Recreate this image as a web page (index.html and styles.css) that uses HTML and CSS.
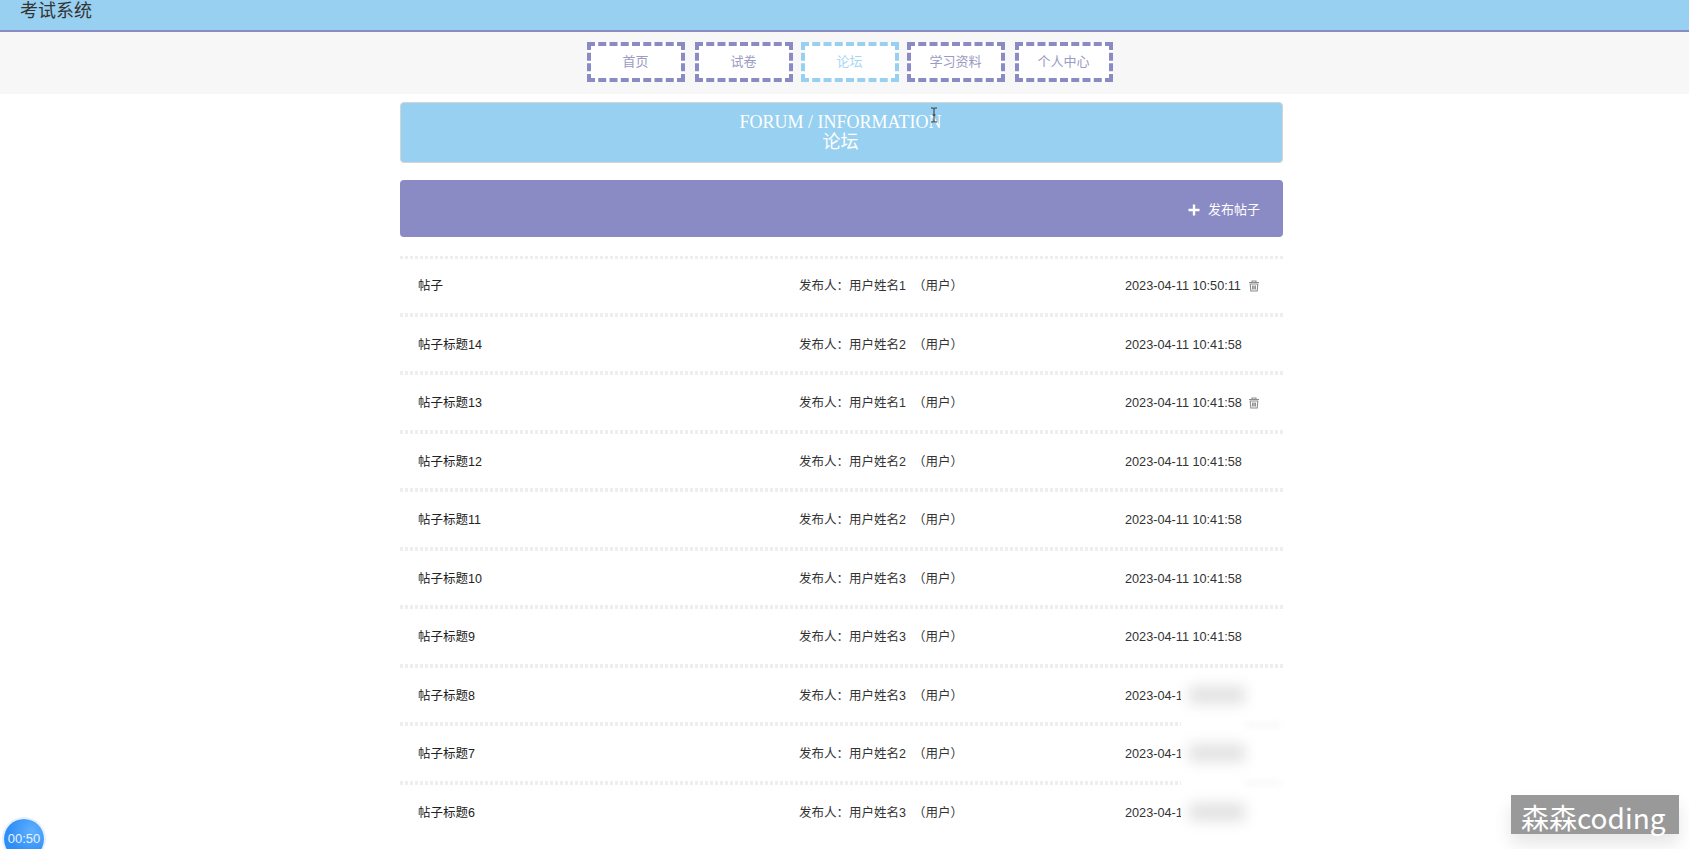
FILE: index.html
```html
<!DOCTYPE html>
<html lang="zh">
<head>
<meta charset="utf-8">
<title>考试系统</title>
<link rel="stylesheet" href="styles.css">
</head>
<body>
<header class="topbar"><span class="brand">考试系统</span></header>
<nav class="nav">
  <a class="nav-item wide-gap">首页</a>
  <a class="nav-item">试卷</a>
  <a class="nav-item active">论坛</a>
  <a class="nav-item wide-gap">学习资料</a>
  <a class="nav-item">个人中心</a>
</nav>
<main class="main">
  <section class="banner">
    <div>FORUM / INFORMATION</div>
    <div>论坛</div>
  </section>
  <section class="toolbar">
    <a class="publish">
      <svg class="plus" viewBox="0 0 12 12" width="12" height="12"><path d="M6 0.5v11M0.5 6h11" stroke="#fff" stroke-width="2.4" fill="none"/></svg>
      <span>发布帖子</span>
    </a>
  </section>
  <ul class="list">
    <li class="row first"><span class="title">帖子</span><span class="author">发布人：用户姓名1 &nbsp;（用户）</span><span class="time">2023-04-11 10:50:11</span><svg class="trash" viewBox="0 0 12 12" width="12" height="12"><path d="M1 2.5h10M4 2.5V1h4v1.5M2.2 4h7.6l-.6 7H2.8zM4.6 5.5v4M6 5.5v4M7.4 5.5v4" stroke="#8c8c8c" stroke-width="1.1" fill="none"/></svg></li>
    <li class="row"><span class="title">帖子标题14</span><span class="author">发布人：用户姓名2 &nbsp;（用户）</span><span class="time">2023-04-11 10:41:58</span></li>
    <li class="row"><span class="title">帖子标题13</span><span class="author">发布人：用户姓名1 &nbsp;（用户）</span><span class="time">2023-04-11 10:41:58</span><svg class="trash" viewBox="0 0 12 12" width="12" height="12"><path d="M1 2.5h10M4 2.5V1h4v1.5M2.2 4h7.6l-.6 7H2.8zM4.6 5.5v4M6 5.5v4M7.4 5.5v4" stroke="#8c8c8c" stroke-width="1.1" fill="none"/></svg></li>
    <li class="row"><span class="title">帖子标题12</span><span class="author">发布人：用户姓名2 &nbsp;（用户）</span><span class="time">2023-04-11 10:41:58</span></li>
    <li class="row"><span class="title">帖子标题11</span><span class="author">发布人：用户姓名2 &nbsp;（用户）</span><span class="time">2023-04-11 10:41:58</span></li>
    <li class="row"><span class="title">帖子标题10</span><span class="author">发布人：用户姓名3 &nbsp;（用户）</span><span class="time">2023-04-11 10:41:58</span></li>
    <li class="row"><span class="title">帖子标题9</span><span class="author">发布人：用户姓名3 &nbsp;（用户）</span><span class="time">2023-04-11 10:41:58</span></li>
    <li class="row"><span class="title">帖子标题8</span><span class="author">发布人：用户姓名3 &nbsp;（用户）</span><span class="time">2023-04-1</span></li>
    <li class="row"><span class="title">帖子标题7</span><span class="author">发布人：用户姓名2 &nbsp;（用户）</span><span class="time">2023-04-1</span></li>
    <li class="row"><span class="title">帖子标题6</span><span class="author">发布人：用户姓名3 &nbsp;（用户）</span><span class="time">2023-04-1</span></li>
  </ul>
</main>
<div class="mosaic">
  <i class="blob b1"></i><i class="blob b2"></i><i class="blob b3"></i>
  <i class="ghost g1"></i><i class="ghost g2"></i>
</div>
<svg class="cursor" viewBox="0 0 8 16" width="8" height="16"><path d="M1 1h2.5l.5 .8.5-.8H7M4 2v12M1 15h2.5l.5-.8.5 .8H7M2.5 8h3" stroke="#333" stroke-width="1" fill="none"/></svg>
<div class="watermark">森森coding</div>
<div class="timer">00:50</div>
</body>
</html>
```
FILE: styles.css
```css
* { box-sizing: border-box; }
html, body { margin: 0; padding: 0; height: 849px; overflow: hidden; background: #fff; }
body { position: relative; font-family: "Liberation Sans", "Noto Sans CJK SC", sans-serif; font-size: 12px; color: #333; }
.topbar { height: 32px; background: #97d0f0; border-bottom: 2px solid #8a8ac4; padding-left: 20px; }
.brand { display: block; font-size: 18px; line-height: 22px; color: #333; }
.nav { height: 62px; background: #f7f7f7; display: flex; justify-content: center; align-items: flex-start; padding: 10px 0 0 10px; gap: 8px; }
.nav-item { width: 98px; height: 40px; border: 4px dashed #8a8ac4; background: #fff; display: flex; align-items: center; justify-content: center; font-size: 13px; line-height: 16px; color: #9a9ac4; }
.nav-item.wide-gap { margin-right: 2px; }
.nav-item.active { border-color: #97d0f0; color: #a9d7f1; }
.main { width: 883px; margin-left: 400px; padding-top: 8px; }
.banner { height: 61px; background: #97d0f0; border: 1px solid #d4d4d4; border-radius: 4px; color: #fff; font-family: "Liberation Serif", "Noto Sans CJK SC", serif; font-size: 18px; line-height: 20px; text-align: center; padding: 9px 2px 0 0; }
.toolbar { height: 57px; margin-top: 17px; background: #8a8ac4; border-radius: 4px; display: flex; justify-content: flex-end; align-items: center; padding: 0 23px 0 0; }
.publish { display: flex; align-items: center; gap: 8px; color: #fff; font-size: 13px; line-height: 16px; padding-top: 2px; }
.plus { display: block; }
.list { list-style: none; margin: 17px 0 0; padding: 0; }
.row { position: relative; height: 58.5px; padding: 6px 0 0 18px; display: flex; align-items: center; font-size: 12.5px; line-height: 16px; background: repeating-linear-gradient(90deg, #eee 0 3px, #fff 3px 5px) top left / 100% 4px no-repeat; }
.row.first { background-position: 0 2px; background-size: 100% 3px; }
.title { width: 381px; color: #222; }
.author { width: 326px; color: #333; white-space: nowrap; }
.time { color: #333; font-size: 12.7px; white-space: nowrap; }
.trash { position: absolute; right: 23px; top: 26px; }
.mosaic { position: absolute; left: 1181px; top: 680px; width: 110px; height: 169px; background: #fff; }
.blob { position: absolute; left: 8px; width: 56px; height: 18px; background: #e2e2e2; filter: blur(7px); }
.b1 { top: 6px; }
.b2 { top: 64px; }
.b3 { top: 123px; }
.ghost { position: absolute; left: 64px; width: 36px; height: 4px; background: #f6f6f6; filter: blur(3px); }
.g1 { top: 43px; }
.g2 { top: 101px; }
.cursor { position: absolute; left: 930px; top: 107px; }
.watermark { position: absolute; left: 1511px; top: 795px; width: 168px; height: 39px; background: #999; color: #fff; font-family: "Noto Sans CJK SC", sans-serif; font-size: 28px; line-height: 45px; padding-left: 10px; white-space: nowrap; box-shadow: 0 10px 18px rgba(0,0,0,.1); }
.timer { position: absolute; left: 4px; top: 819px; width: 40px; height: 40px; border-radius: 50%; background: radial-gradient(circle at 70% 30%, #5fb0ff, #2f8ef5 60%); box-shadow: 0 0 0 2px #e4f0fd; color: #e8f3ff; font-size: 13px; line-height: 40px; text-align: center; }
```
